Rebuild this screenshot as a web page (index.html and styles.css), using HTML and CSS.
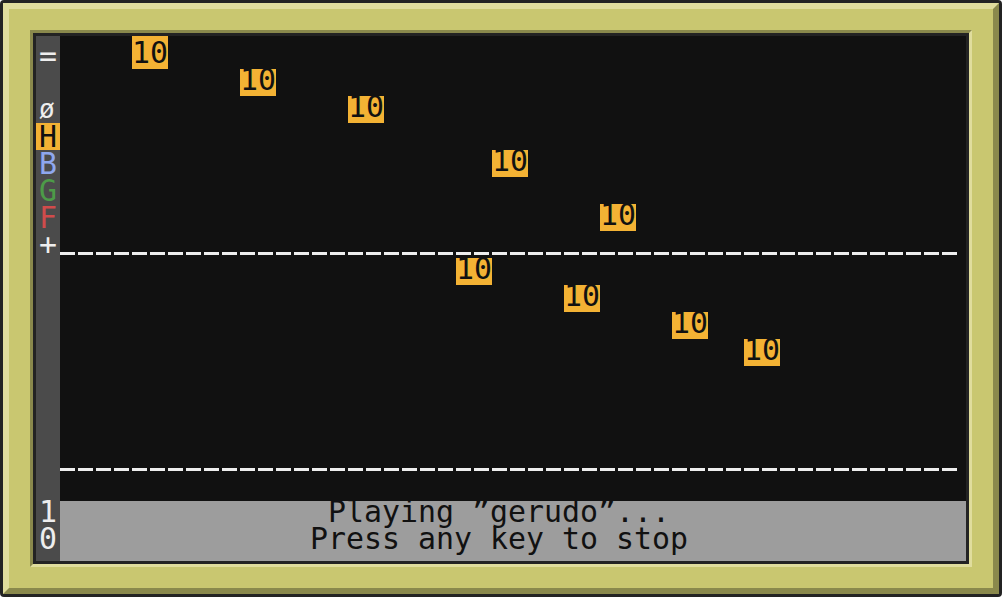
FILE: index.html
```html
<!DOCTYPE html>
<html>
<head>
<meta charset="utf-8">
<title>Music editor</title>
<link rel="stylesheet" href="styles.css">
</head>
<body>
<div class="frame">
  <div class="bevel-outer">
    <div class="bevel-inner">
      <div class="screen">
        <div class="sidebar">
          <div class="side-row">=</div>
          <div class="side-row"></div>
          <div class="side-row side-small">ø</div>
          <div class="side-row side-active">H</div>
          <div class="side-row side-blue">B</div>
          <div class="side-row side-green">G</div>
          <div class="side-row side-red">F</div>
          <div class="side-row">+</div>
          <div class="side-bottom">
            <div class="side-row">1</div>
            <div class="side-row">0</div>
          </div>
        </div>
        <div class="main">
          <div class="roll">
            <div class="dash dash-top"></div>
            <div class="dash dash-bottom"></div>
            <div class="note note-first" style="left:72px;top:0px">10</div>
            <div class="note" style="left:180px;top:33px">10</div>
            <div class="note" style="left:288px;top:60px">10</div>
            <div class="note" style="left:432px;top:114px">10</div>
            <div class="note" style="left:540px;top:168px">10</div>
            <div class="note" style="left:396px;top:222px">10</div>
            <div class="note" style="left:504px;top:249px">10</div>
            <div class="note" style="left:612px;top:276px">10</div>
            <div class="note" style="left:684px;top:303px">10</div>
          </div>
          <div class="status">
            <div class="status-text">
              <div class="status-line">Playing ”gerudo”...</div>
              <div class="status-line">Press any key to stop</div>
            </div>
          </div>
        </div>
      </div>
    </div>
  </div>
</div>
</body>
</html>
```
FILE: styles.css
```css
html, body {
  margin: 0;
  padding: 0;
  background: #ffffff;
}

body {
  width: 1002px;
  height: 597px;
  overflow: hidden;
  font-family: "DejaVu Sans Mono", "Liberation Mono", monospace;
}

.frame {
  width: 1002px;
  height: 597px;
  box-sizing: border-box;
  border: 3px solid #232323;
  border-radius: 4px;
  background: #232323;
}

.bevel-outer {
  box-sizing: border-box;
  height: 100%;
  border-style: solid;
  border-width: 6px;
  border-color: #e0dd9d #8a894c #8a894c #e0dd9d;
  background: #c9c770;
  padding: 21px;
}

.bevel-inner {
  border-style: solid;
  border-width: 3px;
  border-color: #8a894c #e0dd9d #e0dd9d #8a894c;
}

.screen {
  display: flex;
  width: 930px;
  height: 525px;
  border: 3px solid #232323;
  background: #111111;
}

.sidebar {
  width: 24px;
  flex: none;
  display: flex;
  flex-direction: column;
  padding-top: 6px;
  box-sizing: border-box;
  background: #4b4b4b;
  color: #eeeeee;
  font-size: 29.9px;
}

.side-row {
  height: 27px;
  line-height: 27px;
  padding-left: 3px;
}

.side-small {
  font-size: 26px;
}

.side-active {
  background: #f3b234;
  color: #111111;
}

.side-blue { color: #8fa7ee; }
.side-green { color: #4d9b48; }
.side-red { color: #d14b4b; }

.side-bottom {
  margin-top: auto;
  margin-bottom: 9px;
}

.main {
  flex: 1;
  display: flex;
  flex-direction: column;
}

.roll {
  position: relative;
  flex: 1;
  padding-top: 216px;
  overflow: hidden;
}

.dash {
  width: 897px;
  height: 3px;
  background: repeating-linear-gradient(90deg, #eeeeee 0 15px, transparent 15px 18px);
}

.dash-bottom {
  margin-top: 213px;
}

.note {
  position: absolute;
  width: 36px;
  height: 27px;
  background: #f3b234;
  color: #111111;
  font-size: 29.9px;
  line-height: 21px;
  white-space: nowrap;
}

.note-first {
  height: 33px;
  box-sizing: border-box;
  padding-top: 6px;
}

.status {
  height: 60px;
  flex: none;
  background: #9d9d9d;
  color: #111111;
  padding-right: 28px;
}

.status-text {
  margin-top: -3px;
  text-align: center;
  font-size: 29.9px;
  line-height: 27px;
  white-space: nowrap;
}

.status-line {
  height: 27px;
}
```
